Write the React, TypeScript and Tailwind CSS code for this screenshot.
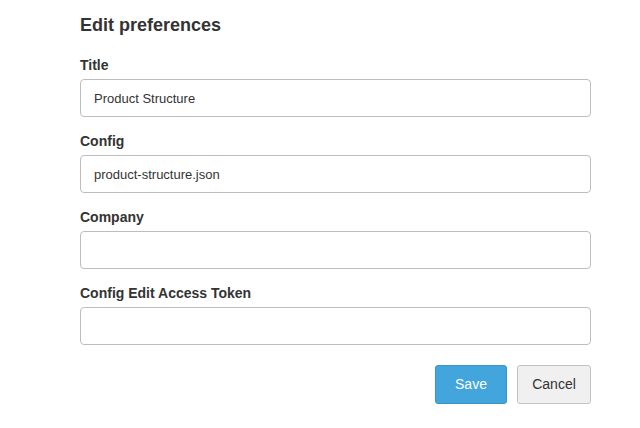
import React from "react";

const fields = [
  { label: "Title", value: "Product Structure" },
  { label: "Config", value: "product-structure.json" },
  { label: "Company", value: "" },
  { label: "Config Edit Access Token", value: "" },
];

export default function App() {
  return (
    <div className="min-h-[428px] w-[640px] bg-white font-['Liberation_Sans',Arial,sans-serif] text-[#333]">
      <div className="ml-[80px] w-[511px] pt-[15px]">
        <h2 className="text-[18px] font-bold leading-[20px] mb-[22px]">Edit preferences</h2>

        {fields.map((f) => (
          <div key={f.label} className="mb-[16px]">
            <label className="block text-[14px] font-bold leading-[16px] mb-[6px]">{f.label}</label>
            <input
              type="text"
              defaultValue={f.value}
              className="block w-full h-[38px] px-[13px] text-[13px] text-[#333] bg-white border border-[#bdbdbd] rounded-[4px] outline-none"
            />
          </div>
        ))}

        <div className="flex justify-end gap-[10px] mt-[20px]">
          <button
            type="button"
            className="w-[72px] h-[39px] text-[14px] text-white bg-[#42a5dc] border border-[#3a93c8] rounded-[3px]"
          >
            Save
          </button>
          <button
            type="button"
            className="w-[74px] h-[39px] text-[14px] text-[#333] bg-[#f0f0f0] border border-[#c2c2c2] rounded-[3px]"
          >
            Cancel
          </button>
        </div>
      </div>
    </div>
  );
}
